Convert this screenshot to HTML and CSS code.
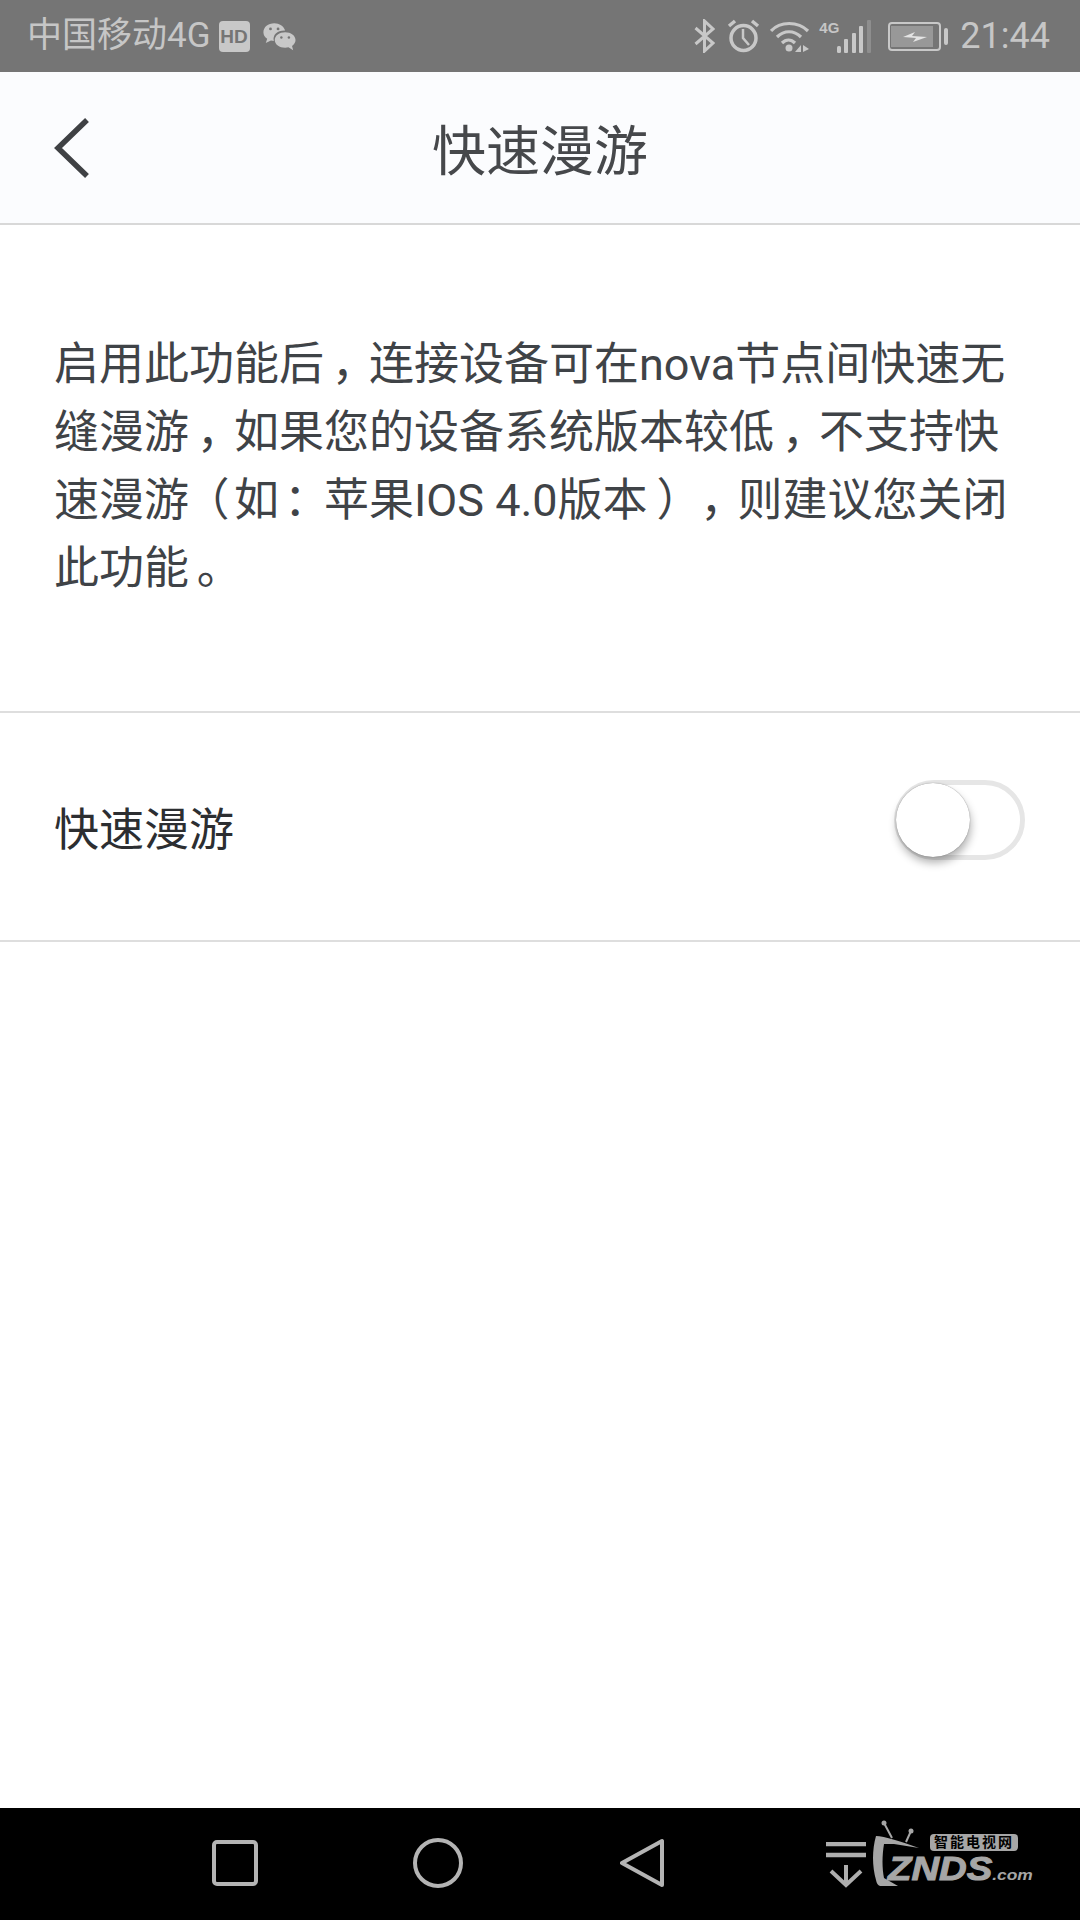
FILE: index.html
```html
<!DOCTYPE html>
<html lang="zh-CN">

<head>
    <meta charset="UTF-8">
    <meta name="viewport" content="width=device-width, initial-scale=1.0">
    <title>快速漫游</title>
    <link rel="stylesheet" href="styles.css">
</head>

<body>
    <div id="phone">
        <div class="status-bar">
            <div class="status-left">
                <span class="carrier">中国移动4G</span>
                <span class="hd">HD</span>
                <svg class="wechat" width="34" height="29" viewBox="0 0 36 30">
                    <path d="M13 1C6.500 1 1.500 5 1.500 10.500C1.500 13.500 3 15.800 5.500 17.500L4 22L9.500 19.300C10.600 19.600 11.500 19.700 12.500 19.800C11 13.500 16 8.500 24.500 8.700C23 4 18.500 1 13 1Z" fill="#c8c8c8" />
                    <path d="M24.500 10.500C18.500 10.500 13.500 14 13.500 18.800C13.500 23.500 18.500 27 24.500 27C25.800 27 27 26.800 28 26.500L33 29.500L31.800 25C34 23.500 35.500 21.300 35.500 18.800C35.500 14 30.500 10.500 24.500 10.500Z" fill="#c8c8c8" />
                    <circle cx="9" cy="7" r="1.500" fill="#757575" />
                    <circle cx="17" cy="7" r="1.500" fill="#757575" />
                    <circle cx="20.500" cy="16" r="1.300" fill="#757575" />
                    <circle cx="28.500" cy="16" r="1.300" fill="#757575" />
                </svg>
            </div>
            <div class="status-right">
                <svg width="21" height="34" viewBox="0 0 21 34" fill="none" stroke="#c8c8c8" stroke-width="3">
                    <path d="M1.500 9L19 24L10.500 32V2L19 10L1.500 25" />
                </svg>
                <svg class="alarm" width="33" height="34" viewBox="0 0 33 34" fill="none" stroke="#c8c8c8">
                    <circle cx="16.500" cy="19" r="12.500" stroke-width="3.500" />
                    <path d="M16 10V19L22 26" stroke-width="2.500" />
                    <path d="M2 7L8 2M31 7L25 2" stroke-width="3.500" />
                </svg>
                <svg class="wifi" width="40" height="33" viewBox="0 0 40 33">
                    <g fill="none" stroke="#c8c8c8" stroke-width="3.200">
                        <path d="M1 11C10 1 28 1 38 11" />
                        <path d="M7 17C14 10 24 10 31 17" />
                        <path d="M12 23C16 19 21 19 25 23" />
                    </g>
                    <circle cx="19" cy="28" r="3.500" fill="#c8c8c8" />
                    <path d="M25 32L31 25V32ZM33 25L39 29L33 32Z" fill="#c8c8c8" />
                </svg>
                <div class="signal">
                    <span class="net">4G</span>
                    <svg width="34" height="33" viewBox="0 0 34 33" fill="#c8c8c8">
                        <rect x="0" y="26" width="4" height="7" rx="1.500" />
                        <rect x="7" y="19" width="4" height="14" rx="1" />
                        <rect x="15" y="13" width="4" height="20" rx="1" />
                        <rect x="22" y="6" width="4" height="27" rx="1" />
                        <rect x="30" y="0" width="4" height="33" rx="1" fill="#8e8e8e" />
                    </svg>
                </div>
                <svg class="battery" width="60" height="29" viewBox="0 0 60 29">
                    <rect x="1" y="1" width="51" height="27" rx="3" fill="none" stroke="#c8c8c8" stroke-width="2" />
                    <rect x="3" y="4" width="42" height="21" fill="#989898" />
                    <rect x="56" y="6" width="4" height="17" rx="2" fill="#c8c8c8" />
                    <path d="M15 15L27 10L24 14L39 15L25 20L28 16Z" fill="#e4e4e4" />
                </svg>
                <span class="time">21:44</span>
            </div>
        </div>

        <div class="header">
            <svg class="back" width="36" height="62" viewBox="0 0 36 62" fill="none" stroke="#3f4144" stroke-width="5.500">
                <path d="M33 3L4 31L33 59" />
            </svg>
            <h1 class="title">快速漫游</h1>
        </div>

        <div class="desc">
            启用此功能后<span class="punct">，</span>连接设备可在nova节点间快速无<br>
            缝漫游<span class="punct">，</span>如果您的设备系统版本较低<span class="punct">，</span>不支持快<br>
            速漫游<span class="punct open">（</span>如<span class="punct colon">：</span>苹果IOS 4.0版本<span class="punct close">）</span><span class="punct">，</span>则建议您关闭<br>
            此功能<span class="punct">。</span>
        </div>

        <div class="row">
            <span class="row-label">快速漫游</span>
            <div class="switch">
                <div class="knob"></div>
            </div>
        </div>

        <div class="spacer"></div>

        <div class="nav-bar">
            <div class="nav-keys">
                <svg width="46" height="46" viewBox="0 0 46 46" fill="none" stroke="#b4b4b4" stroke-width="4">
                    <rect x="2" y="2" width="42" height="42" rx="3" />
                </svg>
                <svg width="50" height="50" viewBox="0 0 50 50" fill="none" stroke="#b4b4b4" stroke-width="4">
                    <circle cx="25" cy="25" r="23" />
                </svg>
                <svg width="44" height="50" viewBox="0 0 44 50" fill="none" stroke="#b4b4b4" stroke-width="4" stroke-linejoin="round">
                    <path d="M42 3V47L2 25Z" />
                </svg>
            </div>
            <div class="logo">
                <svg class="pull" width="40" height="46" viewBox="0 0 40 46" fill="none" stroke="#aeaeae">
                    <path d="M0 2H40M0 13H40" stroke-width="4.500" />
                    <path d="M20 23V43M5 29L20 43L35 29" stroke-width="4" />
                </svg>
                <svg class="tv" width="48" height="68" viewBox="0 0 48 68">
                    <path d="M12 3L20 18M39 11L34 22" fill="none" stroke="#a6a6a6" stroke-width="2" />
                    <circle cx="12" cy="3" r="2.500" fill="#a6a6a6" />
                    <circle cx="39" cy="11" r="2.500" fill="#a6a6a6" />
                    <path d="M4 16C12 16 30 22 47 28L22 24H12C10 36 10 48 12 58L26 66H10C6 66 5 64 4 60C0 46 0 30 4 16Z" fill="#a6a6a6" />
                </svg>
                <div class="logo-text">
                    <span class="logo-cn">智能电视网</span>
                    <span class="logo-en">ZNDS<small>.com</small></span>
                </div>
            </div>
        </div>
    </div>
</body>

</html>
```

FILE: styles.css
```css
* {
    box-sizing: border-box;
}

html,
body {
    margin: 0;
    padding: 0;
    background-color: #fff;
}

body {
    font-family: Roboto, "Noto Sans CJK SC", sans-serif;
    text-spacing-trim: space-all;
}

#phone {
    width: 1080px;
    height: 1920px;
    display: flex;
    flex-direction: column;
    overflow: hidden;
}

.status-bar {
    height: 72px;
    background-color: #757575;
    color: #c6c6c6;
    display: flex;
    justify-content: space-between;
    align-items: center;
    padding: 0 30px 0 27px;
}

.status-left,
.status-right {
    display: flex;
    align-items: center;
}

.carrier {
    font-size: 35px;
    line-height: 40px;
}

.hd {
    width: 31px;
    height: 31px;
    margin-left: 8px;
    background-color: #c8c8c8;
    color: #757575;
    border-radius: 4px;
    font-family: "Liberation Sans", sans-serif;
    font-weight: bold;
    font-size: 19px;
    line-height: 31px;
    text-align: center;
}

.wechat {
    margin-left: 12px;
}

.status-right svg {
    display: block;
}

.alarm {
    margin-left: 12px;
}

.wifi {
    margin-left: 10px;
}

.signal {
    display: flex;
    align-items: flex-start;
    margin-left: 9px;
}

.net {
    width: 18px;
    font-family: "Liberation Sans", sans-serif;
    font-weight: bold;
    font-size: 15px;
    line-height: 16px;
    white-space: nowrap;
}

.battery {
    margin-left: 17px;
}

.time {
    font-size: 36px;
    line-height: 40px;
    margin-left: 12px;
}

.header {
    height: 153px;
    background-color: #fbfcfe;
    border-bottom: 2px solid #d8d8d8;
    display: flex;
    align-items: center;
    position: relative;
}

.back {
    position: absolute;
    left: 54px;
    top: 45px;
}

.title {
    width: 100%;
    margin: 10px 0 0;
    color: #46484b;
    font-size: 54px;
    font-weight: normal;
    line-height: 60px;
    text-align: center;
}

.desc {
    height: 488px;
    padding-top: 106px;
    padding-left: 54px;
    color: #3f4347;
    font-size: 45px;
    line-height: 68px;
    white-space: nowrap;
    border-bottom: 2px solid #dedede;
}

/* half width glyph + padding = one full cell, with the mark nearer the middle */
.punct {
    font-feature-settings: "halt";
    padding: 0 0.33em 0 0.17em;
}

.punct.colon {
    padding: 0 0.39em 0 0.11em;
}

.punct.open {
    padding: 0 0.1em 0 0.4em;
}

.punct.close {
    padding: 0 0.3em 0 0.2em;
}

.row {
    height: 229px;
    display: flex;
    justify-content: space-between;
    align-items: center;
    padding: 0 55px 0 54px;
    border-bottom: 2px solid #dedede;
}

.row-label {
    color: #2c2e31;
    font-size: 45px;
    line-height: 60px;
    margin-top: 9px;
}

.switch {
    width: 131px;
    height: 80px;
    border: 5px solid #e6e6e6;
    border-radius: 40px;
    position: relative;
    margin-top: -13px;
}

.knob {
    position: absolute;
    left: -3px;
    top: -2px;
    width: 74px;
    height: 74px;
    border-radius: 50%;
    background-color: #fff;
    box-shadow: 0 0 1px rgba(0, 0, 0, 0.5), 1px 6px 8px rgba(0, 0, 0, 0.3);
}

.spacer {
    flex: 1;
}

.nav-bar {
    height: 112px;
    background-color: #000;
    position: relative;
    display: flex;
    align-items: center;
}

.nav-keys {
    display: flex;
    align-items: center;
    padding-left: 212px;
    margin-top: -2px;
}

.nav-keys svg {
    display: block;
}

.nav-keys svg:nth-child(2) {
    margin-left: 155px;
}

.nav-keys svg:nth-child(3) {
    margin-left: 157px;
}

.logo {
    position: absolute;
    left: 826px;
    top: 12px;
    display: flex;
    align-items: flex-start;
}

.pull {
    margin-top: 22px;
}

.tv {
    margin-left: 6px;
}

.logo-text {
    display: flex;
    flex-direction: column;
    margin-left: -32px;
    font-family: "Liberation Sans", "Noto Sans CJK SC", sans-serif;
    color: #a6a6a6;
    font-weight: bold;
}

.logo-cn {
    align-self: flex-start;
    margin-left: 42px;
    margin-top: 14px;
    width: 88px;
    height: 17px;
    background-color: #a6a6a6;
    color: #000;
    border-radius: 4px;
    font-size: 14px;
    letter-spacing: 2px;
    line-height: 17px;
    text-align: center;
    white-space: nowrap;
}

.logo-en {
    margin-top: 5px;
    font-style: italic;
    font-size: 33px;
    line-height: 26px;
    -webkit-text-stroke: 1px #a6a6a6;
    white-space: nowrap;
    transform: scaleX(1.16);
    transform-origin: left center;
}

.logo-en small {
    font-size: 15px;
    -webkit-text-stroke: 0;
}
```
